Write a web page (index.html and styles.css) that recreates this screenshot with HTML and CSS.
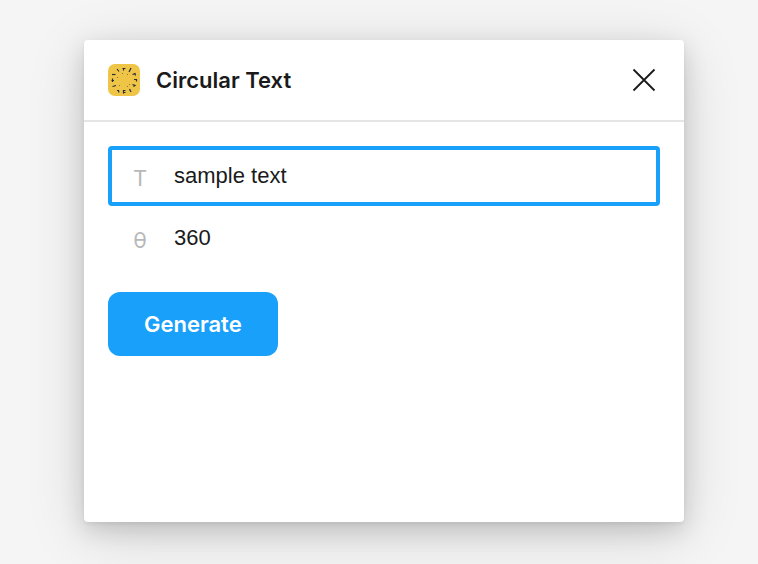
FILE: index.html
```html
<!DOCTYPE html>
<html lang="en">
<head>
    <meta charset="UTF-8">
    <meta name="viewport" content="width=device-width, initial-scale=1.0">
    <title>Circular Text</title>
    <link rel="stylesheet" href="styles.css">
</head>
<body>
    <main class="window">
        <header class="header">
            <svg class="logo" viewBox="0 0 32 32" aria-hidden="true">
                <rect width="32" height="32" rx="7" fill="#efc548"/>
                <g fill="none" stroke="#2b2d35" stroke-width="1.2">
                    <path d="M14.5 4.5H17.5M15.5 4.5V6.5"/>
                    <path d="M23 4L21 8"/>
                    <path d="M24.5 10.5L27 9.5L27.5 11.5"/>
                    <path d="M26 15.5H28.5V17.5"/>
                    <path d="M24.5 20.5L27 21.5L25.5 22.5"/>
                    <path d="M21.5 25L23 28"/>
                    <path d="M15.5 26.5H17.5M15.5 28.5H17.5M15.5 26V29.5"/>
                    <path d="M9 26.5H10.5L11 28.5"/>
                    <path d="M4.5 22.5L8 21.5"/>
                    <path d="M3.5 16.5H6M4.5 14.5V18"/>
                    <path d="M4 10.5H7.5"/>
                    <path d="M9 5L11 7.5"/>
                </g>
                <g fill="#8a7440">
                    <rect x="14" y="9" width="1" height="1"/>
                    <rect x="19" y="10" width="1" height="1"/>
                    <rect x="9" y="13" width="1" height="1"/>
                    <rect x="21" y="20" width="1" height="1"/>
                    <rect x="11" y="21" width="1" height="1"/>
                    <rect x="19" y="22" width="1" height="1"/>
                </g>
            </svg>
            <h1 class="title">Circular Text</h1>
            <button class="close" type="button" aria-label="Close">
                <svg viewBox="0 0 24 24" aria-hidden="true">
                    <path d="M1.5 1.5L22.5 22.5M22.5 1.5L1.5 22.5" fill="none" stroke="#1a1a1a" stroke-width="1.8"/>
                </svg>
            </button>
        </header>
        <form class="form">
            <div class="field field--active">
                <label class="field__icon" for="text" aria-label="Text">T</label>
                <input class="field__input" type="text" id="text" value="sample text">
            </div>
            <div class="field">
                <label class="field__icon" for="angle" aria-label="Angle">θ</label>
                <input class="field__input" type="text" id="angle" value="360">
            </div>
            <button class="generate" type="button">Generate</button>
        </form>
    </main>
</body>
</html>
```
FILE: styles.css
```css
* {
    box-sizing: border-box;
}
body {
    margin: 0;
    min-height: 100vh;
    padding: 40px 74px 42px 84px;
    display: flex;
    background: #f5f5f5;
    color: #1a1a1a;
    font-family: Inter, "Liberation Sans", sans-serif;
    font-size: 22px;
}
.window {
    flex: 1;
    min-width: 0;
    background: #fff;
    border-radius: 4px;
    box-shadow: 0 12px 60px rgba(0, 0, 0, 0.14), 0 8px 24px rgba(0, 0, 0, 0.14), 0 2px 4px rgba(0, 0, 0, 0.06);
}
.header {
    display: flex;
    align-items: center;
    gap: 16px;
    padding: 24px 28px 24px 24px;
    border-bottom: 2px solid #e5e5e5;
}
.logo {
    width: 32px;
    height: 32px;
}
.title {
    flex: 1;
    margin: 0;
    font-size: 22px;
    font-weight: 600;
    line-height: 32px;
}
.close {
    display: flex;
    padding: 0;
    border: 0;
    background: none;
}
.close svg {
    width: 24px;
    height: 24px;
}
.form {
    padding: 24px;
}
.field {
    display: flex;
    align-items: center;
    height: 60px;
    border: 4px solid transparent;
    border-radius: 4px;
    margin-bottom: 2px;
}
.field--active {
    border-color: #18a0fb;
}
.field__icon {
    width: 56px;
    padding-top: 4px;
    color: #b8b8b8;
    line-height: 32px;
    text-align: center;
}
.field__input {
    flex: 1;
    min-width: 0;
    height: 52px;
    padding: 0 6px;
    border: 0;
    outline: none;
    background: none;
    color: #1a1a1a;
    font-family: "Liberation Sans", Arial, sans-serif;
    font-size: 22px;
}
.generate {
    height: 64px;
    margin-top: 22px;
    padding: 0 36px;
    border: 0;
    border-radius: 12px;
    background: #18a0fb;
    color: #fff;
    font-family: inherit;
    font-size: 22px;
    font-weight: 600;
}
```
